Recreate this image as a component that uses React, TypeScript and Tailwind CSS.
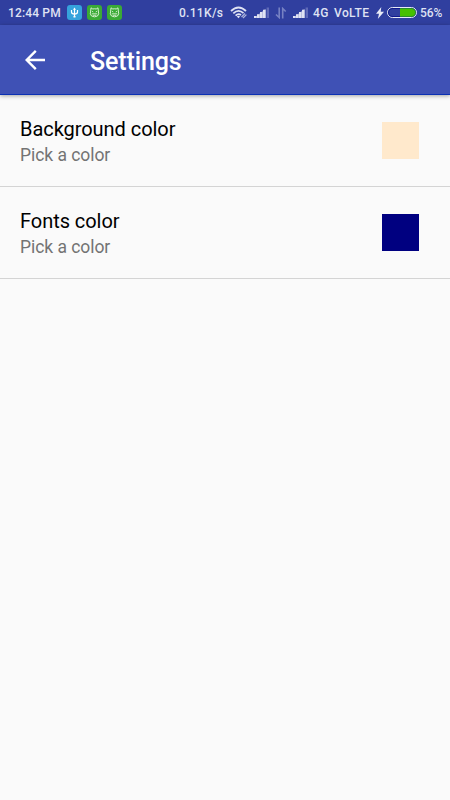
import type { ReactNode } from 'react';

const settings = [
  { title: 'Background color', summary: 'Pick a color', swatch: 'bg-[#ffe9cc]' },
  { title: 'Fonts color', summary: 'Pick a color', swatch: 'bg-[#000080]' },
] as const;

function Badge({ className, children }: { className: string; children: ReactNode }) {
  return (
    <span className={`h-[15px] w-[15px] rounded-[3px] ${className}`}>
      <svg viewBox="0 0 15 15" className="block h-full w-full" fill="none" stroke="#fff">
        {children}
      </svg>
    </span>
  );
}

function UsbBadge() {
  return (
    <Badge className="bg-[#36a3dc]">
      <path d="M7.5 4v8M4.5 5v2q0 2 3 2.2Q10.5 9 10.5 7V5" strokeWidth="1.2" />
      <path d="M6 4.7 7.5 2.5 9 4.7zM6.5 11h2v1.5h-2z" fill="#fff" stroke="none" />
    </Badge>
  );
}

function CatBadge() {
  return (
    <Badge className="bg-[#3aaa35]">
      <path
        d="M4 2.8 5.8 4Q7.5 3.5 9.2 4L11 2.8 11.3 6Q12.5 9 10.5 11Q7.5 12.7 4.5 11Q2.5 9 3.7 6Z"
        stroke="#d5f0cf"
        strokeWidth="1"
      />
      <path d="M5 6.3l1.3.7M10 6.3l-1.3.7M4.8 8.8h5.4M5.8 10.3h3.4" stroke="#d5f0cf" strokeWidth="0.9" />
    </Badge>
  );
}

function WifiIcon() {
  return (
    <svg viewBox="0 0 18 13" className="h-[13px] w-[18px]" fill="none" stroke="#dfe2f3" strokeWidth="1.8">
      <path d="M1 5Q8.5-2 16 5M3.3 7.4Q8.5 2.5 13.5 7.2M5.6 9.6Q8.5 6.9 11 9.1" />
      <path d="M6.8 10.5Q8.5 9.2 10 10.5L8.5 12.2z" fill="#dfe2f3" stroke="none" />
      <path d="m11.5 11 3.5-3.5M13 12l3.4-3.4" stroke="#aab1dc" strokeWidth="1.3" />
    </svg>
  );
}

function SignalIcon() {
  return (
    <svg viewBox="0 0 16 11" className="block h-[11px] w-4" fill="#dfe2f3">
      <path d="M0 9h2.6v2H0zM3 7.3h2.6V11H3zM6 5h2.6v6H6zM9 2.8h2.6V11H9z" />
      <path d="M0 11 11.6 1.8V11z" opacity="0.5" />
      <path d="M12.6.5H15V11h-2.4z" fill="#5f6ab8" />
    </svg>
  );
}

function DataIcon() {
  return (
    <svg viewBox="0 0 12 12" className="block h-3 w-3" fill="none" stroke="#7681c3" strokeWidth="1.6">
      <path d="M4.2.5v10L1 7.5M7.7 11.5V1.5l3 3" />
    </svg>
  );
}

function BoltIcon() {
  return (
    <svg viewBox="0 0 8 12" className="h-3 w-2" fill="#e8eaf6">
      <path d="M5.3 0 0 6.8h3L1.8 12 8 4.8H4.7z" />
    </svg>
  );
}

function Battery() {
  return (
    <span className="flex h-[11px] w-[30px] overflow-hidden rounded-full border border-[#e8eaf6]">
      <span className="w-[12px] rounded-l-full border-y border-l border-[#101a8c] bg-[#303f9f]" />
      <span className="flex-1 rounded-r-full border-y border-r border-[#2a8a30] bg-[#46c000]" />
    </span>
  );
}

function StatusBar() {
  return (
    <div className="flex h-[25px] items-center bg-[#303f9f] pl-2 text-xs font-medium whitespace-nowrap text-[#dfe2f3]">
      <span className="w-[59px] tracking-[0.15px]">12:44 PM</span>
      <span className="flex gap-[5px]">
        <UsbBadge />
        <CatBadge />
        <CatBadge />
      </span>
      <span className="ml-[57px] w-[51px] tracking-[0.3px]">0.11K/s</span>
      <WifiIcon />
      <span className="flex w-[61px] items-center">
        <span className="ml-1.5"><SignalIcon /></span>
        <span className="ml-[5px]"><DataIcon /></span>
        <span className="ml-1.5"><SignalIcon /></span>
      </span>
      <span className="ml-1 w-[21px] tracking-[0.4px]">4G</span>
      <span className="w-[42px] tracking-[0.4px]">VoLTE</span>
      <BoltIcon />
      <span className="ml-[3px]"><Battery /></span>
      <span className="ml-[3px] tracking-[-0.1px]">56%</span>
    </div>
  );
}

function Toolbar() {
  return (
    <header className="relative flex h-[70px] items-center border-b border-[#0b30b4] bg-[#3f51b5] pl-[25px] text-white shadow-[0_1px_4px_rgba(0,0,0,0.35)]">
      <button type="button" aria-label="Back" className="h-5 w-5">
        <svg viewBox="0 0 20 20" className="block h-5 w-5" fill="none" stroke="currentColor" strokeWidth="2.4">
          <path d="M20 10H2M10.8.9 1.7 10l9.1 9.1" />
        </svg>
      </button>
      <h1 className="mt-[5px] ml-[45px] text-[25px] leading-[30px] font-medium tracking-[-0.12px]">Settings</h1>
    </header>
  );
}

export default function App() {
  return (
    <div className="h-screen overflow-hidden bg-[#fafafa] font-['Roboto',sans-serif]">
      <StatusBar />
      <Toolbar />
      <main>
        {settings.map((item) => (
          <div key={item.title} className="flex h-[92px] items-center justify-between border-b border-[#d4d4d4] pr-[31px] pl-5">
            <div className="pt-0.5">
              <div className="text-[20px] leading-[27px] tracking-[-0.05px] text-black">{item.title}</div>
              <div className="text-[17.5px] leading-6 tracking-[-0.05px] text-[#737373]">{item.summary}</div>
            </div>
            <div className={`h-[37px] w-[37px] ${item.swatch}`} />
          </div>
        ))}
      </main>
    </div>
  );
}
